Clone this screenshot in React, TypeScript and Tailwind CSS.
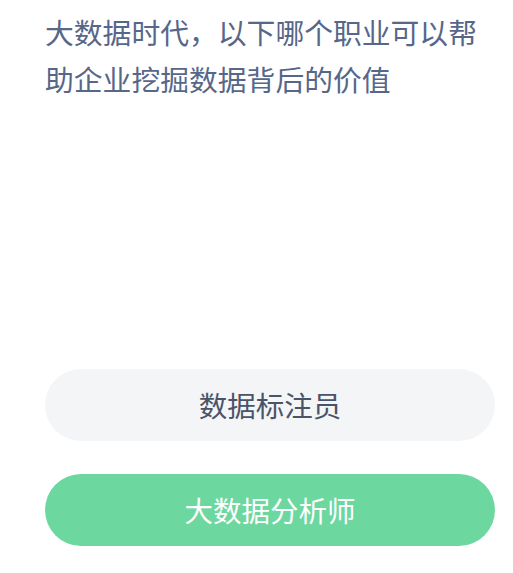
import React from 'react';

const FONT = { fontFamily: '"Noto Sans CJK SC", "Noto Sans", sans-serif' };

const options = [
  { id: 'a', label: '数据标注员', correct: false },
  { id: 'b', label: '大数据分析师', correct: true },
];

export default function App() {
  return (
    <div className="min-h-screen bg-white pl-[45px] pr-[18px] pt-[8px]" style={FONT}>
      <p className="text-[28.8px] leading-[47px] text-[#56678a]">
        大数据时代，以下哪个职业可以帮助企业挖掘数据背后的价值
      </p>

      <div className="mt-[267px] flex flex-col gap-[33px]">
        {options.map(opt => (
          <button
            key={opt.id}
            className={
              opt.correct
                ? 'h-[72px] w-full rounded-full bg-[#6dd7a0] text-[28.5px] text-white'
                : 'h-[72px] w-full rounded-full bg-[#f4f5f7] text-[28.5px] text-[#4a5468]'
            }
          >
            {opt.label}
          </button>
        ))}
      </div>
    </div>
  );
}
